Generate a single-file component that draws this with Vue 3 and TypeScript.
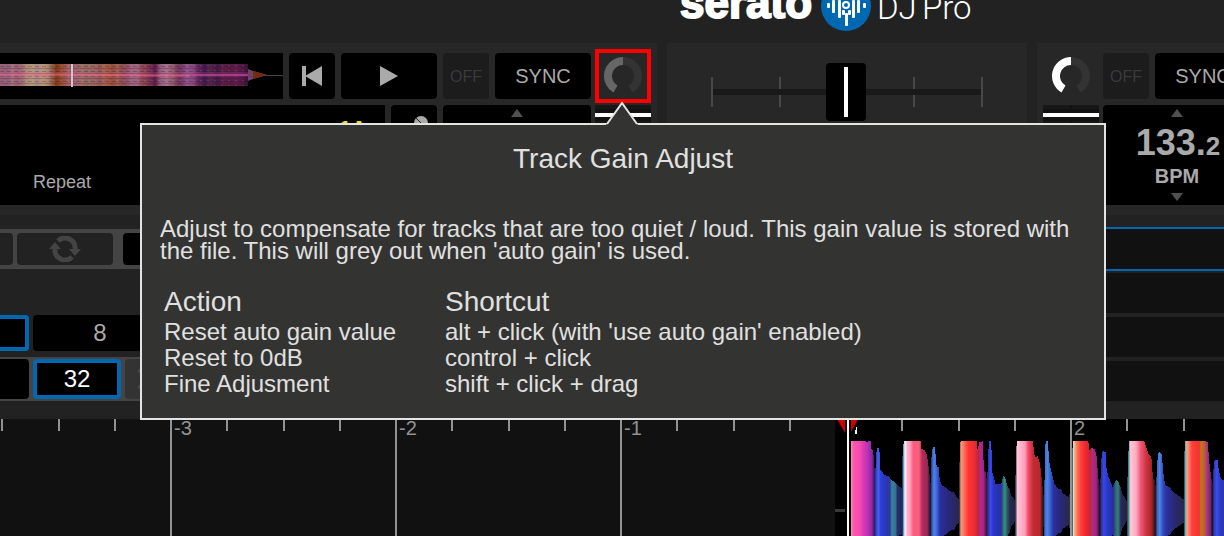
<script setup lang="ts">
interface Stop { at: number; color: string }

const barTicks = [
  { x: 170, label: '-3' },
  { x: 395, label: '-2' },
  { x: 620, label: '-1' },
]
const beatTicks = [1, 58, 114, 226, 283, 339, 451, 508, 564, 676, 733, 789, 901, 958, 1014, 1126, 1183]

// Amplitude outline: x position and half height around the centre line, in thirds of a pixel
const outline: number[][] = [
  [93, 209], [138, 209], [138, 205], [145, 209], [153, 209], [154, 185], [159, 182], [162, 152], [165, 104], [168, 152],
  [170, 188], [178, 188], [180, 157], [181, 122], [188, 117], [192, 108], [208, 104], [213, 94], [222, 88], [232, 77], [245, 68],
  [246, 137], [249, 192], [252, 209], [302, 209], [304, 185], [314, 184], [321, 167], [326, 132], [329, 107], [333, 72],
  [334, 157], [338, 191], [345, 191], [348, 152], [350, 132], [357, 131], [359, 92], [366, 77], [378, 70], [390, 59],
  [402, 57], [412, 38], [417, 34], [418, 132], [421, 207], [423, 209], [470, 209], [473, 182], [478, 207], [488, 209],
  [490, 162], [493, 122], [499, 112], [501, 72], [504, 162], [507, 209], [514, 209], [516, 117], [520, 108], [527, 80],
  [544, 80], [546, 92], [550, 104], [556, 99], [559, 87], [563, 72], [569, 67], [573, 47], [585, 32], [588, 182], [591, 209],
  [638, 209], [642, 182], [644, 162], [653, 164], [660, 142], [665, 97], [671, 42], [673, 52], [675, 182], [677, 209],
  [684, 209], [687, 152], [692, 127], [698, 102], [704, 80], [714, 67], [724, 64], [727, 54], [736, 48], [748, 42],
  [757, 182], [760, 209], [805, 209], [808, 182], [815, 190], [824, 185], [829, 172], [833, 122], [838, 72], [842, 102],
  [845, 172], [850, 179], [857, 176], [859, 132], [864, 107], [872, 87], [878, 72], [885, 87], [890, 92], [896, 86],
  [902, 70], [907, 52], [914, 40], [920, 30], [925, 172], [928, 209], [973, 209], [977, 197], [983, 177], [987, 167],
  [994, 166], [997, 122], [1000, 95], [1006, 92], [1008, 42], [1010, 122], [1014, 172], [1018, 176], [1025, 172],
  [1028, 137], [1032, 97], [1036, 78], [1050, 70], [1062, 55], [1078, 44], [1092, 34], [1093, 172], [1096, 209],
  [1155, 209], [1163, 207], [1166, 172], [1170, 122], [1174, 112], [1176, 62], [1180, 122], [1184, 154], [1193, 152],
  [1196, 122], [1204, 95], [1212, 92], [1300, 60],
]
const toX = (v: number) => 820 + v / 3
const centre = 92
const wavePath =
  'M' + outline.map(([x, h]) => `${toX(x).toFixed(1)} ${(centre - h / 3).toFixed(1)}`).join('L') +
  'L' + [...outline].reverse().map(([x, h]) => `${toX(x).toFixed(1)} ${(centre + h / 3).toFixed(1)}`).join('L') + 'Z'

const waveStops: [number, string][] = [
  [93, '#ff8fb8'], [100, '#ff58ae'], [118, '#f84ab4'], [130, '#d83cb0'], [142, '#c030b8'], [156, '#8a2aa0'], [163, '#301860'],
  [168, '#2b3fc8'], [175, '#4a62e8'], [182, '#2a40d8'], [200, '#2c34b0'], [210, '#2c3a98'], [215, '#357f9c'], [226, '#33788f'], [232, '#28306a'],
  [247, '#23235a'], [250, '#4aa0b8'], [255, '#fff4ff'], [262, '#ffb0c8'], [270, '#ffa0bc'], [280, '#ff5a80'], [297, '#f86078'],
  [306, '#b82a60'], [322, '#982850'], [331, '#1c1430'], [336, '#3458b0'], [342, '#4c84ec'], [350, '#3f66d8'], [360, '#2a2ea0'], [385, '#28287a'], [416, '#29284e'],
  [419, '#404050'], [423, '#ff9a70'], [432, '#ff7060'], [445, '#ff3434'], [462, '#f02c34'], [475, '#b82838'], [480, '#b82490'],
  [490, '#a82688'], [500, '#401434'], [505, '#2a36a0'], [511, '#3a4cf0'], [520, '#2b36c8'], [543, '#2a2ea0'], [549, '#2c6878'], [554, '#35937c'],
  [562, '#285866'], [570, '#29294e'], [585, '#242440'], [588, '#53636a'], [592, '#ffc6dc'], [615, '#ff9cb8'], [625, '#f04a68'], [640, '#c02c34'],
  [660, '#b82828'], [670, '#201018'], [675, '#3c70d0'], [682, '#4a86e8'], [690, '#3c64cc'], [700, '#2a30a0'], [720, '#28287c'], [745, '#29284e'],
  [757, '#405050'], [760, '#d8e0d0'], [768, '#ff8860'], [782, '#ff4038'], [800, '#e82430'], [812, '#bc2838'], [817, '#b42888'],
  [829, '#9c267c'], [839, '#281028'], [845, '#2c36a0'], [851, '#3648e8'], [862, '#2b38c8'], [880, '#292e94'], [887, '#2d6876'], [894, '#328278'],
  [903, '#28285c'], [920, '#242440'], [926, '#449090'], [931, '#f8c8d8'], [948, '#ffaac0'], [962, '#f05878'], [978, '#d03440'], [994, '#a82828'],
  [1006, '#281018'], [1012, '#3a68bc'], [1019, '#4b84e8'], [1030, '#3048b8'], [1040, '#2a30a0'], [1070, '#282866'], [1092, '#29284e'],
  [1096, '#58b8ac'], [1101, '#ffa088'], [1116, '#ff4038'], [1138, '#f03430'], [1143, '#c07a20'], [1154, '#b86028'], [1159, '#b43890'],
  [1172, '#70265c'], [1177, '#181028'], [1182, '#3038b8'], [1190, '#3a4cf0'], [1202, '#2b38b8'], [1300, '#28287c'],
]
const gradientStops: Stop[] = waveStops.map(([x, color]) => ({ at: (x - 93) / (1300 - 93), color }))

const overviewColors = [
  '#9a6674', '#8c5e78', '#a0707a', '#96606e', '#a68278', '#b39c78', '#a88a84', '#b89878', '#a07c66', '#7e3c16', '#96502c', '#a0646c',
  '#94606c', '#a06e66', '#8f6a60', '#9a6a5c', '#8e5c58', '#a46448', '#944e3c', '#9c5e50', '#8a4a50', '#98607c', '#9c6a80', '#8c4a52',
  '#7a3850', '#581c44', '#966480', '#a07088', '#8a5868', '#6c3458', '#8a5286', '#885080', '#602858', '#3c1c4c', '#542848', '#3c1a42',
  '#5a2244', '#541c40', '#5c1e4a', '#521a44', '#381238',
]
const logoBars = [
  { x: 827, y: 3, h: 5 }, { x: 832, y: 0, h: 13 }, { x: 838, y: 0, h: 18 }, { x: 842, y: 10, h: 5 }, { x: 845, y: 13, h: 13 },
  { x: 848, y: 10, h: 5 }, { x: 852, y: 0, h: 18 }, { x: 857, y: 0, h: 13 }, { x: 863, y: 3, h: 5 },
]
const shortcuts = [
  ['Reset auto gain value', "alt + click (with 'use auto gain' enabled)"],
  ['Reset to 0dB', 'control + click'],
  ['Fine Adjusment', 'shift + click + drag'],
]
</script>

<template>
  <main class="app">
    <header class="brand">
      <svg class="brand-logo" width="310" height="43" viewBox="670 0 310 43" role="img" aria-label="serato DJ Pro">
        <text class="wordmark" x="680" y="18">serato</text>
        <circle cx="846" cy="6" r="25" fill="#0068b0" />
        <rect v-for="b in logoBars" :key="b.x" :x="b.x" :y="b.y" width="3" :height="b.h" rx="1" fill="#fff" />
        <circle cx="846" cy="5" r="4" fill="#fff" />
        <circle cx="846" cy="5" r="2" fill="#0068b0" />
        <text class="product" x="877" y="19">DJ</text>
        <text class="product" x="922" y="19">Pro</text>
      </svg>
    </header>

    <section class="decks">
      <div class="deck deck-left">
        <div class="deck-main">
          <div class="row">
            <div class="overview">
              <svg width="283" height="46" viewBox="0 0 283 46" aria-hidden="true">
                <defs>
                  <linearGradient id="ov">
                    <stop v-for="(c, i) in overviewColors" :key="i" :offset="i / (overviewColors.length - 1)" :stop-color="c" />
                  </linearGradient>
                  <pattern id="scan" width="7" height="5" patternUnits="userSpaceOnUse">
                    <rect width="7" height="1" fill="#600040" opacity=".25" />
                    <rect y="3" width="4" height="1" fill="#200050" opacity=".25" />
                    <rect x="4" y="2" width="2" height="1" fill="#ffa060" opacity=".15" />
                  </pattern>
                </defs>
                <rect y="11" width="248" height="22" fill="url(#ov)" />
                <rect y="11" width="248" height="22" fill="url(#scan)" />
                <path d="M0 21.500H248" stroke="#f060a0" stroke-width="5" opacity=".15" />
                <path d="M0 21.500H60L150 22.500H190" stroke="#f46a8a" stroke-width="2" opacity=".5" fill="none" />
                <path d="M190 22H248" stroke="#b84a9c" stroke-width="2" opacity=".7" />
                <path d="M248 16L253 18L267 22L253 26L248 28Z" fill="#70406c" />
                <path d="M253 18L267 22L253 26Z" fill="#742c10" />
                <path d="M264 22.500H283" stroke="#444" />
                <path d="M72 11V34" stroke="#d0c8c0" stroke-width="2" />
              </svg>
            </div>
            <button class="key key-small" aria-label="Previous">
              <svg width="20" height="20" viewBox="0 0 20 20"><path d="M0 0H4V20H0ZM20 0V20L3 10Z" fill="#aaa" /></svg>
            </button>
            <button class="key key-wide" aria-label="Play">
              <svg width="18" height="20" viewBox="0 0 18 20"><path d="M0 0L18 10L0 20Z" fill="#aaa" /></svg>
            </button>
            <button class="key key-small key-off">OFF</button>
            <button class="key key-wide">SYNC</button>
          </div>
          <div class="row row-tall">
            <div class="track-display">
              <span class="track-key">1A</span>
              <span class="repeat">Repeat</span>
            </div>
            <div class="pitch-lock">
              <svg width="14" height="14" viewBox="0 0 14 14" aria-hidden="true"><circle cx="7" cy="7" r="7" fill="#aaa" /><path d="M2 2L12 12" stroke="#222" stroke-width="1" /></svg>
            </div>
            <div class="tempo">
              <svg width="12" height="8" viewBox="0 0 12 8" aria-hidden="true"><path d="M6 0L12 8H0Z" fill="#505050" /></svg>
            </div>
          </div>
        </div>
        <div class="gain-column">
          <button class="knob knob-selected" aria-label="Track gain">
            <svg width="40" height="40" viewBox="0 0 40 40" fill="none" stroke-width="8"><path d="M20 5A15 15 0 0 1 27.500 33" stroke="#333" /><path d="M20 5A15 15 0 0 0 12.500 33" stroke="#666" /></svg>
          </button>
          <div class="meter"></div>
        </div>
      </div>

      <div class="mixer">
        <div class="fader">
          <svg class="fader-scale" viewBox="0 0 272 30" preserveAspectRatio="none" aria-hidden="true">
            <path d="M1 0V30M69 0V30M203 0V30M271 0V30" stroke="#484848" stroke-width="2" />
            <rect x="2" y="12" width="268" height="6" fill="#191919" />
          </svg>
          <button class="fader-cap" aria-label="Crossfader"><span></span></button>
        </div>
      </div>

      <div class="deck deck-right">
        <div class="gain-column">
          <button class="knob" aria-label="Track gain, right deck">
            <svg width="40" height="40" viewBox="0 0 40 40" fill="none" stroke-width="8"><path d="M20 5A15 15 0 0 1 27.500 33" stroke="#333" /><path d="M20 5A15 15 0 0 0 12.500 33" stroke="#fff" /></svg>
          </button>
          <div class="meter"></div>
        </div>
        <div class="deck-main">
          <div class="row">
            <button class="key key-small key-off">OFF</button>
            <button class="key key-wide">SYNC</button>
          </div>
          <div class="row row-tall">
            <div class="tempo">
              <svg width="12" height="8" viewBox="0 0 12 8" aria-hidden="true"><path d="M6 0L12 8H0Z" fill="#505050" /></svg>
              <strong class="bpm-value">133.<small>2</small></strong>
              <strong class="bpm-label">BPM</strong>
              <svg class="tempo-down" width="12" height="8" viewBox="0 0 12 8" aria-hidden="true"><path d="M6 8L0 0H12Z" fill="#505050" /></svg>
            </div>
          </div>
        </div>
      </div>
    </section>

    <section class="pads">
      <div class="loops">
        <div class="loop-strip">
          <span class="loop-key loop-edge"></span>
          <button class="loop-key loop-refresh" aria-label="Reloop">
            <svg width="32" height="26" viewBox="0 0 32 26" fill="none" stroke="#444" stroke-width="5">
              <path d="M9 5A10 10 0 0 1 26 13M23 21A10 10 0 0 1 6 13" />
              <path d="M20 13H32L26 20ZM0 13L6 6L12 13Z" fill="#444" stroke="none" />
            </svg>
          </button>
          <span class="loop-key loop-next"></span>
        </div>
        <div class="beat-row">
          <span class="beat beat-edge beat-on"></span>
          <button class="beat beat-eight">8</button>
        </div>
        <div class="beat-strip">
          <span class="beat beat-edge"></span>
          <button class="beat beat-on beat-thirty">32</button>
          <span class="beat beat-dim">
            <svg width="14" height="22" viewBox="0 0 14 22" aria-hidden="true"><path d="M0 3L4 0V6ZM0 19L4 16V22Z" fill="#4a4a4a" /></svg>
          </span>
        </div>
      </div>
      <div class="cues">
        <div class="cue cue-on"></div>
        <div class="cue"></div>
        <div class="cue"></div>
        <div class="cue"></div>
      </div>
    </section>

    <section class="timeline" aria-label="Waveform">
      <svg width="100%" height="117" viewBox="0 0 1224 117" preserveAspectRatio="xMinYMin slice">
        <defs>
          <linearGradient id="wave" gradientUnits="userSpaceOnUse" x1="851" x2="1253.333">
            <stop v-for="(s, i) in gradientStops" :key="i" :offset="s.at" :stop-color="s.color" />
          </linearGradient>
        </defs>
        <rect width="1224" height="117" fill="#000" />
        <rect width="835" height="117" fill="#111" />
        <path :d="wavePath" fill="url(#wave)" shape-rendering="crispEdges" />
        <g fill="#929292">
          <rect v-for="x in beatTicks" :key="x" :x="x" y="0" width="2" height="12" />
          <g v-for="b in barTicks" :key="b.x">
            <rect :x="b.x" width="2" height="117" />
            <text class="bar-label" :x="b.x + 4" y="16">{{ b.label }}</text>
          </g>
          <rect x="1070" width="2" height="117" />
          <text class="bar-label" x="1074" y="16">2</text>
        </g>
        <path d="M837 0H845V14ZM851 0H858L851 13Z" fill="#d00000" />
        <path d="M855 11H856V15H855ZM856 8H857V15H856Z" fill="#eee" />
        <rect x="835" y="90" width="10" height="3" fill="#3a3a3a" />
        <rect x="847" width="2" height="117" fill="#fff" />
      </svg>
    </section>

    <aside class="tip" role="tooltip">
      <svg class="tip-arrow" width="32" height="24" viewBox="0 0 32 24" aria-hidden="true"><path d="M0 24L16 1L32 24Z" fill="#333331" /><path d="M1 23L16 2L31 23" fill="none" stroke="#e4e4e4" stroke-width="2" /></svg>
      <h1>Track Gain Adjust</h1>
      <p>Adjust to compensate for tracks that are too quiet / loud. This gain value is stored with the file. This will grey out when 'auto gain' is used.</p>
      <table>
        <thead><tr><th>Action</th><th>Shortcut</th></tr></thead>
        <tbody><tr v-for="s in shortcuts" :key="s[0]"><td>{{ s[0] }}</td><td>{{ s[1] }}</td></tr></tbody>
      </table>
    </aside>
  </main>
</template>

<style>
body { margin: 0; background: #222; }
</style>

<style scoped>
* { box-sizing: border-box; }
.app { position: relative; overflow: hidden; background: #222; color: #aaa; font-family: "Liberation Sans", Arial, sans-serif; }
button { padding: 0; border: 0; font: inherit; color: inherit; }
svg { display: block; flex: none; }
.brand { padding-left: 670px; }
.wordmark { font: bold 44px "Liberation Sans", sans-serif; fill: #fff; stroke: #fff; stroke-width: 2px; }
.product { font: 300 33px Roboto, sans-serif; fill: #fff; }
.decks { display: grid; grid-template-columns: minmax(0, 657fr) 360px minmax(0, 187fr); gap: 10px; }
.deck { display: flex; gap: 4px; padding: 10px 6px; background: #272727; overflow: hidden; }
.deck-left { padding-left: 0; }
.deck-right { padding-right: 0; }
.deck-main { flex: 1; min-width: 0; display: flex; flex-direction: column; gap: 6px; }
.row { display: flex; gap: 6px; height: 46px; }
.row-tall { height: 100px; }
.overview { flex: 1; min-width: 0; overflow: hidden; background: #000; }
.key { flex: none; display: flex; align-items: center; justify-content: center; border-radius: 4px; background: #000; font-size: 20px; }
.key-small { width: 46px; }
.key-wide { width: 96px; }
.key-off { padding-top: 2px; background: #1c1c1c; color: #3a3a3a; font-size: 16px; }
.track-display { flex: 1; min-width: 0; display: flex; flex-direction: column; justify-content: space-between; padding: 13px 18px 12px 33px; background: #000; font-size: 18px; line-height: 22px; }
.track-key { align-self: flex-end; color: #ffe000; font-size: 22px; font-weight: bold; }
.pitch-lock { flex: none; width: 46px; padding: 11px 0 0 23px; border-radius: 4px; background: #000; }
.tempo { flex: none; width: 148px; display: flex; flex-direction: column; align-items: center; padding: 4px 0; border-radius: 4px; background: #000; }
.bpm-value { margin: 6px 0 0 2px; font-size: 36px; line-height: 40px; }
.bpm-value small { font-size: 26px; }
.bpm-label { font-size: 20px; line-height: 20px; }
.tempo-down { margin-top: auto; }
.gain-column { flex: none; width: 56px; display: flex; flex-direction: column; align-items: center; gap: 6px; }
.knob { display: flex; align-items: center; justify-content: center; width: 48px; height: 46px; background: #272727; }
.knob-selected { outline: 4px solid #f00; }
.meter { width: 100%; height: 100px; background: linear-gradient(transparent 8px, #fff 8px, #fff 12px, transparent 12px), linear-gradient(90deg, transparent 27px, #111 27px, #111 29px, transparent 29px), repeating-linear-gradient(#171717 0 4px, #111 4px 8px); }
.mixer { padding: 20px 44px; background: #272727; }
.fader { position: relative; display: flex; align-items: center; justify-content: center; height: 58px; }
.fader-scale { width: 100%; height: 30px; }
.fader-cap { position: absolute; left: calc(50% - 21px); top: 0; display: flex; justify-content: center; align-items: center; width: 40px; height: 58px; border-radius: 4px; background: #000; }
.fader-cap span { width: 4px; height: 50px; background: #fff; }
.pads { display: flex; justify-content: space-between; height: 204px; }
.loops { padding-top: 14px; width: 240px; }
.loop-strip { display: flex; gap: 4px; height: 40px; padding: 4px 0; background: #444; }
.loop-key { flex: none; display: flex; align-items: center; justify-content: center; border-radius: 4px; background: #222; }
.loop-edge { width: 13px; border-radius: 0 4px 4px 0; }
.loop-refresh { width: 96px; }
.loop-next { width: 96px; margin-left: 6px; background: #000; }
.beat-row { display: flex; gap: 4px; height: 36px; margin-top: 46px; }
.beat-strip { display: flex; gap: 4px; height: 44px; margin-top: 6px; padding: 2px 0; background: #444; }
.beat { flex: none; border-radius: 4px; background: #000; font-size: 24px; }
.beat-edge { width: 29px; border-radius: 0 4px 4px 0; }
.beat-on { border: 4px solid #0068b0; color: #fff; }
.beat-edge.beat-on { border-left: 0; }
.beat-eight { width: 134px; }
.beat-thirty { width: 88px; }
.beat-dim { display: flex; align-items: center; width: 88px; padding-left: 12px; background: #333; }
.cues { flex: none; width: 187px; padding-top: 12px; }
.cue { height: 40px; margin-bottom: 4px; background: #111; }
.cue-on { height: 44px; margin-bottom: 2px; border: solid #0068b0; border-width: 2px 0; }
.timeline { height: 117px; overflow: hidden; background: #000; }
.bar-label { font-size: 20px; }
.tip { position: absolute; left: 140px; right: 118px; top: 123px; height: 297px; padding: 18px 18px 0; border: 2px solid #e4e4e4; background: #333331; color: #e0e0e0; font-size: 24px; line-height: 22px; }
.tip-arrow { position: absolute; left: 464px; top: -24px; }
.tip h1 { margin: 0; text-align: center; font-size: 28px; font-weight: normal; line-height: 32px; }
.tip p { margin: 43px 0 0; }
.tip table { margin: 24px 0 0 4px; border-collapse: collapse; line-height: 26px; }
.tip th { padding: 0 0 1px; text-align: left; font-size: 28px; font-weight: normal; line-height: 32px; }
.tip td { padding: 0; }
.tip th:first-child, .tip td:first-child { width: 281px; }
</style>
